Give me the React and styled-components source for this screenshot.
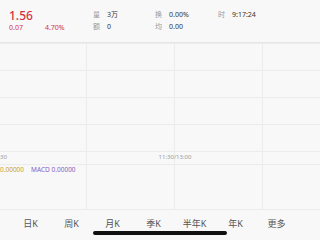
import React from 'react';
import styled, { createGlobalStyle } from 'styled-components';

const Global = createGlobalStyle`
  html, body { margin: 0; padding: 0; }
  body {
    width: 320px;
    height: 240px;
    overflow: hidden;
    background: #f8f8f8;
    font-family: 'Noto Sans', 'Noto Sans CJK SC', sans-serif;
  }
`;

const Page = styled.div`
  width: 320px;
  height: 240px;
  display: flex;
  flex-direction: column;
  overflow: hidden;
`;

const Header = styled.div`
  height: 43px;
  display: flex;
  align-items: flex-start;
  padding: 9px 0 0 9px;
  box-sizing: border-box;
  border-bottom: 1px solid #e6e6e6;
`;

const PriceBlock = styled.div`
  width: 80px;
  display: flex;
  flex-direction: column;
`;

const Price = styled.div`
  color: #d6323e;
  font-size: 12px;
  line-height: 13px;
  font-weight: 500;
`;

const ChangeRow = styled.div`
  display: flex;
  gap: 22px;
  color: #d6323e;
  font-size: 7px;
  line-height: 9px;
  margin-top: 1px;
`;

const Stats = styled.div`
  display: grid;
  grid-template-columns: 62px 63px 60px;
  row-gap: 3px;
  padding-top: 1px;
  margin-left: 4px;
`;

const Stat = styled.div`
  display: flex;
  gap: 7px;
  font-size: 7px;
  line-height: 9px;
  color: #333;
`;

const Label = styled.span`
  color: #999;
`;

const Chart = styled.div`
  position: relative;
  margin-left: -2px;
  width: 352px;
  display: flex;
  flex-direction: column;
`;

const GridRows = styled.div`
  display: grid;
  grid-template-columns: repeat(4, 88px);
  grid-auto-rows: 27px;
  border-top: 1px solid #ececec;
`;

const Cell = styled.div`
  border-bottom: 1px solid #ececec;
  border-left: ${({ $first }) => ($first ? 'none' : '1px solid #ececec')};
`;

const TimeAxis = styled.div`
  height: 12px;
  display: grid;
  grid-template-columns: repeat(4, 88px);
  border-bottom: 1px solid #ececec;
  font-size: 6px;
  line-height: 12px;
  color: #999;
`;

const TimeLabel = styled.div`
  position: relative;
  border-left: ${({ $first }) => ($first ? 'none' : '1px solid #ececec')};
`;

const TimeText = styled.span`
  position: absolute;
  left: ${({ $first }) => ($first ? '3px' : '0')};
  transform: translateX(-50%);
  white-space: nowrap;
  top: -1px;
`;

const Macd = styled.div`
  height: 44px;
  display: grid;
  grid-template-columns: repeat(4, 88px);
`;

const MacdCell = styled.div`
  border-left: ${({ $first }) => ($first ? 'none' : '1px solid #ececec')};
`;

const Legend = styled.div`
  position: absolute;
  left: 2px;
  top: 122px;
  display: flex;
  gap: 7px;
  font-size: 6.5px;
  line-height: 9px;
`;

const LegendItem = styled.span`
  color: ${({ $color }) => $color};
`;

const Tabs = styled.div`
  flex: 1;
  display: grid;
  grid-template-columns: repeat(7, 41px);
  align-items: start;
  padding: 8px 0 0 10px;
  border-top: 1px solid #ececec;
  position: relative;
`;

const Tab = styled.div`
  font-size: 9px;
  line-height: 12px;
  color: #555;
  text-align: center;
`;

const HomeBar = styled.div`
  position: absolute;
  left: 93px;
  bottom: 5px;
  width: 134px;
  height: 4px;
  border-radius: 2px;
  background: #111;
`;

const tabs = ['日K', '周K', '月K', '季K', '半年K', '年K', '更多'];

export default function App() {
  const cols = [0, 1, 2, 3];
  const rows = [0, 1, 2, 3];
  const times = ['9:30', '', '11:30/13:00', ''];
  return (
    <Page>
      <Global />
      <Header>
        <PriceBlock>
          <Price>1.56</Price>
          <ChangeRow>
            <span>0.07</span>
            <span>4.70%</span>
          </ChangeRow>
        </PriceBlock>
        <Stats>
          <Stat><Label>量</Label><span>3万</span></Stat>
          <Stat><Label>换</Label><span>0.00%</span></Stat>
          <Stat><Label>时</Label><span>9:17:24</span></Stat>
          <Stat><Label>额</Label><span>0</span></Stat>
          <Stat><Label>均</Label><span>0.00</span></Stat>
        </Stats>
      </Header>
      <Chart>
        <GridRows>
          {rows.map((r) =>
            cols.map((c) => <Cell key={`${r}-${c}`} $first={c === 0} />)
          )}
        </GridRows>
        <TimeAxis>
          {times.map((t, i) => (
            <TimeLabel key={i} $first={i === 0}>
              {t && <TimeText $first={i === 0}>{t}</TimeText>}
            </TimeLabel>
          ))}
        </TimeAxis>
        <Macd>
          {cols.map((c) => <MacdCell key={c} $first={c === 0} />)}
        </Macd>
        <Legend>
          <LegendItem $color="#c9a42c">0.00000</LegendItem>
          <LegendItem $color="#8a62c2">MACD 0.00000</LegendItem>
        </Legend>
      </Chart>
      <Tabs>
        {tabs.map((t) => (
          <Tab key={t}>{t}</Tab>
        ))}
        <HomeBar />
      </Tabs>
    </Page>
  );
}
